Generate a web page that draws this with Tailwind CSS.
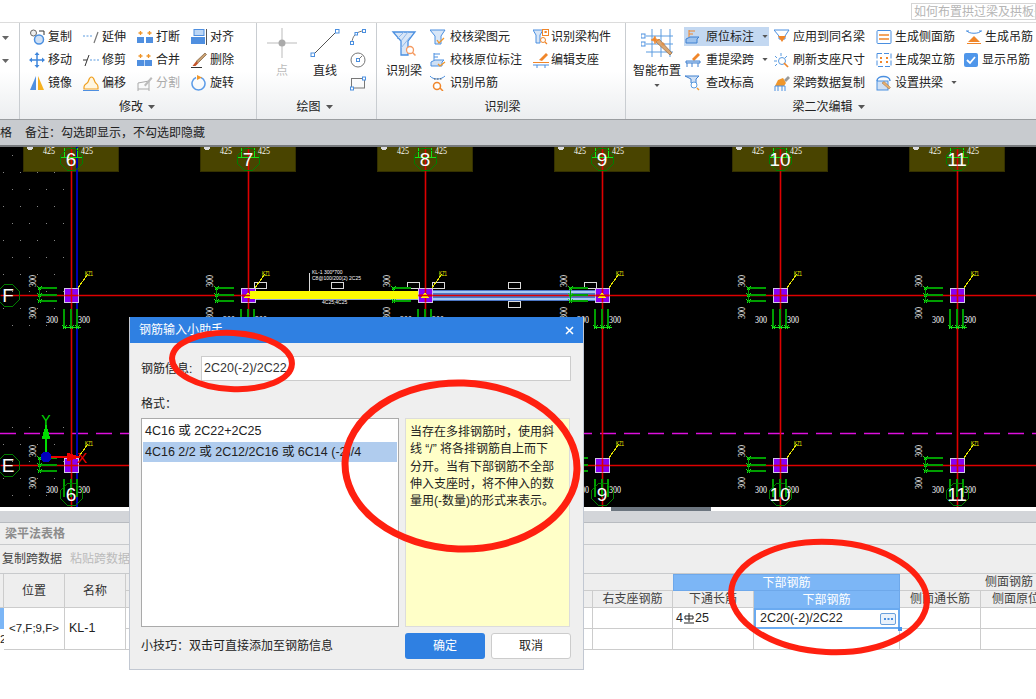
<!DOCTYPE html>
<html lang="zh">
<head>
  <meta charset="UTF-8" />
  <title>梁二次编辑</title>
  <script src="https://cdn.jsdelivr.net/npm/@tailwindcss/browser@4"></script>
</head>
<body class="relative w-[1036px] h-[699px] overflow-hidden bg-white text-[12px] leading-none text-[#222] [font-family:'Liberation_Sans','Noto_Sans_CJK_SC',sans-serif]">

  <!-- title bar -->
  <div class="h-[22px] flex justify-end items-start pt-[3px] overflow-hidden">
    <div class="w-[125px] h-[17px] border border-[#d5d5d5] pl-[2px] text-[#b5b5b5] overflow-hidden whitespace-nowrap leading-[16px]">如何布置拱过梁及拱板处</div>
  </div>

  <!-- ribbon -->
  <div class="h-[97px] flex border-t border-[#dcdcdc] bg-linear-to-b from-white via-white via-50% to-[#eceef0]">
    <div class="w-[20px] border-r border-[#c9cdd1] pl-[2px] pt-[13px] flex flex-col gap-[19px]">
      <svg class="w-[7px] h-[4px]" viewBox="0 0 7 4"><path d="M0 0h7L3.500 4z" fill="#666"/></svg>
      <svg class="w-[7px] h-[4px]" viewBox="0 0 7 4"><path d="M0 0h7L3.500 4z" fill="#666"/></svg>
    </div>

    <!-- 修改 -->
    <div class="w-[237px] border-r border-[#c9cdd1] flex flex-col">
      <div class="h-[72px] pt-[2px] pl-[9px] grid grid-cols-[54px_54px_54px_54px] auto-rows-[23px] items-center">
        <div class="flex items-center gap-[3px]"><svg class="w-4 h-4" viewBox="0 0 16 16"><circle cx="4.500" cy="4" r="3" fill="#eee" stroke="#666"/><circle cx="10" cy="10.500" r="4.500" fill="#cfe0f5" stroke="#4a8fe0" stroke-width="1.500"/><path d="M10 2h5v4" fill="none" stroke="#333"/></svg><span>复制</span></div>
        <div class="flex items-center gap-[3px]"><svg class="w-4 h-4" viewBox="0 0 16 16"><path d="M0 7h10" stroke="#5a9be0" stroke-dasharray="2 1.500"/><path d="M11 14L15 3" stroke="#777" stroke-width="1.200"/></svg><span>延伸</span></div>
        <div class="flex items-center gap-[3px]"><svg class="w-4 h-4" viewBox="0 0 16 16"><rect x="0" y="8" width="7" height="6" fill="#4f8fe0"/><rect x="9" y="8" width="7" height="6" fill="#4f8fe0"/><path d="M3.500 2v4M1.500 4h4M12.500 2v4M10.500 4h4" stroke="#f0962a" stroke-width="1.300"/></svg><span>打断</span></div>
        <div class="flex items-center gap-[3px]"><svg class="w-4 h-4" viewBox="0 0 16 16"><rect x="3" y="0.500" width="10" height="6" fill="#bcd6f5" stroke="#4f8fe0"/><rect x="0" y="8" width="14" height="7" fill="#4f8fe0"/><path d="M15.500 0v16" stroke="#555"/></svg><span>对齐</span></div>

        <div class="flex items-center gap-[3px]"><svg class="w-4 h-4" viewBox="0 0 16 16"><path d="M8 0l2.500 3h-5zM8 16l2.500-3h-5zM0 8l3-2.500v5zM16 8l-3-2.500v5z" fill="#3f86dc"/><path d="M8 3v10M3 8h10" stroke="#3f86dc" stroke-width="1.500"/></svg><span>移动</span></div>
        <div class="flex items-center gap-[3px]"><svg class="w-4 h-4" viewBox="0 0 16 16"><path d="M0 8h4" stroke="#333"/><path d="M7 8h9" stroke="#5a9be0" stroke-dasharray="2 1.500"/><path d="M2 14L6 3" stroke="#333"/></svg><span>修剪</span></div>
        <div class="flex items-center gap-[3px]"><svg class="w-4 h-4" viewBox="0 0 16 16"><rect x="0" y="8" width="15" height="6" fill="#4f8fe0"/><path d="M7.500 8v6" stroke="#bcd6f5"/><path d="M3.500 2v4M1.500 4h4M11.500 2v4M9.500 4h4" stroke="#f0962a" stroke-width="1.300"/></svg><span>合并</span></div>
        <div class="flex items-center gap-[3px]"><svg class="w-4 h-4" viewBox="0 0 16 16"><path d="M14 1l1.500 1.500-8 8-2.500-1z" fill="#c9a070" stroke="#6b4a2a" stroke-width=".6"/><path d="M5 9.500l2.500 1.500-3 3-3 0z" fill="#c4542a"/><path d="M0 15.500h11" stroke="#333"/></svg><span>删除</span></div>

        <div class="flex items-center gap-[3px]"><svg class="w-4 h-4" viewBox="0 0 16 16"><path d="M7 1v14H1z" fill="#4f8fe0"/><path d="M9 1v14h6z" fill="#f5b01e"/></svg><span>镜像</span></div>
        <div class="flex items-center gap-[3px]"><svg class="w-4 h-4" viewBox="0 0 16 16"><path d="M1 12c0-3 3-3 4-5s1-5 3.500-5S11 5 12 7s3 2 3 5v2H1z" fill="#fff6e0" stroke="#f0a020" stroke-width="1.200"/><path d="M0 15.500h16" stroke="#4f8fe0"/></svg><span>偏移</span></div>
        <div class="flex items-center gap-[3px] text-[#aaa]"><svg class="w-4 h-4" viewBox="0 0 16 16"><path d="M1 8l11-2v8H1zM1 14v2M12 14v2" fill="none" stroke="#aaa"/><path d="M7 10l7-8 1.500 1.500-7 8z" fill="#bbb"/></svg><span>分割</span></div>
        <div class="flex items-center gap-[3px]"><svg class="w-4 h-4" viewBox="0 0 16 16"><path d="M5 2.500a6.500 6.500 0 1 0 5 0" fill="none" stroke="#5b9be8" stroke-width="1.500"/><path d="M6 0l5 2.500L6 5z" fill="#f0962a"/></svg><span>旋转</span></div>
      </div>
      <div class="h-[24px] flex items-center justify-center gap-[5px] pr-[2px]"><span>修改</span><svg class="w-[7px] h-[4px]" viewBox="0 0 7 4"><path d="M0 0h7L3.500 4z" fill="#555"/></svg></div>
    </div>

    <!-- 绘图 -->
    <div class="w-[120px] border-r border-[#c9cdd1] flex flex-col">
      <div class="h-[72px] pt-[2px] pl-[7px] flex">
        <div class="w-[36px] flex flex-col items-center text-[#bbb]">
          <svg class="w-[30px] h-[30px] mt-[3px]" viewBox="0 0 30 30"><path d="M15 0v30M0 15h30" stroke="#bbb"/><circle cx="15" cy="15" r="3.500" fill="#aaa"/></svg>
          <span class="mt-[4px] leading-[18px]">点</span>
        </div>
        <div class="w-[50px] flex flex-col items-center">
          <svg class="w-[30px] h-[30px] mt-[3px]" viewBox="0 0 30 30"><path d="M3 27L27 3" stroke="#555"/><rect x="1" y="25" width="3.500" height="3.500" fill="#fff" stroke="#4a8fe0"/><rect x="25.500" y="1.500" width="3.500" height="3.500" fill="#fff" stroke="#4a8fe0"/></svg>
          <span class="mt-[4px] leading-[18px]">直线</span>
        </div>
        <div class="flex flex-col">
          <div class="h-[23px] flex items-center"><svg class="w-4 h-4" viewBox="0 0 16 16"><path d="M2 14C2 7 7 2 14 2" fill="none" stroke="#777"/><rect x="0.500" y="12.500" width="3" height="3" fill="#fff" stroke="#4a8fe0"/><rect x="12.500" y="0.500" width="3" height="3" fill="#fff" stroke="#4a8fe0"/><rect x="5" y="3.500" width="2.500" height="2.500" fill="#fff" stroke="#4a8fe0"/></svg></div>
          <div class="h-[23px] flex items-center"><svg class="w-4 h-4" viewBox="0 0 16 16"><circle cx="8" cy="8" r="7" fill="none" stroke="#777"/><rect x="6.500" y="6.500" width="3" height="3" fill="#fff" stroke="#4a8fe0"/><path d="M9 7l3-3" stroke="#777"/></svg></div>
          <div class="h-[23px] flex items-center"><svg class="w-4 h-4" viewBox="0 0 16 16"><rect x="1.500" y="3.500" width="13" height="9.500" fill="none" stroke="#777"/><rect x="0.500" y="12" width="3" height="3" fill="#fff" stroke="#4a8fe0"/><rect x="12.500" y="2" width="3" height="3" fill="#fff" stroke="#4a8fe0"/></svg></div>
        </div>
      </div>
      <div class="h-[24px] flex items-center justify-center gap-[5px] pr-[4px]"><span>绘图</span><svg class="w-[7px] h-[4px]" viewBox="0 0 7 4"><path d="M0 0h7L3.500 4z" fill="#555"/></svg></div>
    </div>

    <!-- 识别梁 -->
    <div class="w-[249px] border-r border-[#c9cdd1] flex flex-col">
      <div class="h-[72px] pt-[2px] pl-[7px] flex">
        <div class="w-[40px] flex flex-col items-center">
          <svg class="w-[30px] h-[30px] mt-[3px]" viewBox="0 0 30 30"><path d="M4 4h22l-7 9v14h-7V13z" fill="#d8e6f7" stroke="#4a8fe0" stroke-width="1.300"/><path d="M8 11l7-7M12 13l7-9M12 20l9-11" stroke="#8fb8ea"/><circle cx="21" cy="22" r="3.500" fill="#fff" stroke="#f59a60" stroke-width="1.300"/><path d="M23.500 24.500l3 3" stroke="#f59a60" stroke-width="1.500"/></svg>
          <span class="mt-[4px] leading-[18px]">识别梁</span>
        </div>
        <div class="ml-[6px] w-[103px] flex flex-col">
          <div class="h-[23px] flex items-center gap-[4px]"><svg class="w-4 h-4" viewBox="0 0 16 16"><path d="M0 1h15l-4 6v8H5V7z" fill="#d8e6f7" stroke="#4a8fe0"/><path d="M7 11l2 3 5-5" fill="none" stroke="#f0962a" stroke-width="1.300"/></svg><span>校核梁图元</span></div>
          <div class="h-[23px] flex items-center gap-[4px]"><svg class="w-4 h-4" viewBox="0 0 16 16"><path d="M4 8V1M4 2h6M4 5h4" stroke="#4a8fe0" fill="none"/><path d="M1 10l4-2h9l-2 2v4H1z" fill="#cfe0f5" stroke="#4a8fe0"/><path d="M8 12l2 2 5-4" fill="none" stroke="#f0962a" stroke-width="1.300"/></svg><span>校核原位标注</span></div>
          <div class="h-[23px] flex items-center gap-[4px]"><svg class="w-4 h-4" viewBox="0 0 16 16"><path d="M0 1c3 4 11 4 15 0" fill="none" stroke="#4a8fe0"/><path d="M4 4h8" stroke="#555" stroke-dasharray="1.500 1.500"/><circle cx="7" cy="11" r="3.500" fill="#fff" stroke="#f0862a" stroke-width="1.500"/><path d="M10 13l3 3" stroke="#f0862a" stroke-width="1.500"/></svg><span>识别吊筋</span></div>
        </div>
        <div class="flex flex-col">
          <div class="h-[23px] flex items-center gap-[2px]"><svg class="w-4 h-4" viewBox="0 0 16 16"><path d="M0 1h10l-3 5v8H3V6z" fill="#d8e6f7" stroke="#4a8fe0"/><rect x="9.500" y="0.500" width="6" height="6" fill="#fff" stroke="#f0862a"/><path d="M11.500 3.500h2v-1h-2" fill="none" stroke="#f0862a"/><circle cx="10" cy="11" r="2.500" fill="#fff" stroke="#f0862a"/><path d="M12 13l2 2" stroke="#f0862a" stroke-width="1.300"/></svg><span>识别梁构件</span></div>
          <div class="h-[23px] flex items-center gap-[2px]"><svg class="w-4 h-4" viewBox="0 0 16 16"><path d="M6 8l7-7 2 2-6 6z" fill="#f0862a"/><path d="M0 10.500h16" stroke="#f0862a"/><path d="M0 13h16M4 13v3M12 13v3" stroke="#4a8fe0"/></svg><span>编辑支座</span></div>
        </div>
      </div>
      <div class="h-[24px] flex items-center justify-center pl-[3px]"><span>识别梁</span></div>
    </div>

    <!-- 梁二次编辑 -->
    <div class="w-[409px] flex flex-col">
      <div class="h-[72px] pt-[2px] pl-[6px] flex">
        <div class="w-[50px] flex flex-col items-center">
          <svg class="w-[32px] h-[30px] mt-[3px]" viewBox="0 0 32 30"><path d="M5 8h27M5 16h27M5 24h27M11 1v28M20 1v28M29 1v28" stroke="#5a9be0" fill="none"/><rect x="0" y="6" width="4" height="4" fill="#fff" stroke="#4a8fe0"/><rect x="0" y="14" width="4" height="4" fill="#fff" stroke="#4a8fe0"/><path d="M15 14l14 13 2-2-13-14z" fill="#d9a672" stroke="#8b5a2a" stroke-width=".6"/><path d="M12 11l2-3 1 3 3 1-3 1-1 3-1-3-3-1zM22 14v4M20 16h4" fill="#f0862a" stroke="#f0862a" stroke-width=".6"/></svg>
          <span class="mt-[4px] leading-[18px] whitespace-nowrap">智能布置</span>
          <svg class="w-[6px] h-[3px] mt-[4px]" viewBox="0 0 7 4"><path d="M0 0h7L3.500 4z" fill="#555"/></svg>
        </div>
        <div class="ml-[2px] w-[90px] flex flex-col">
          <div class="h-[23px] flex items-center"><div class="w-[85px] h-[19px] bg-[#c3d8f1] flex items-center pl-px"><svg class="w-4 h-4 mr-[5px]" viewBox="0 0 16 16"><path d="M4 8V1M4 2h6M4 5h4" stroke="#f0862a" fill="none"/><path d="M1 10l4-2h9l-2 2v4H1z" fill="#9cc2ee" stroke="#3f80d0"/></svg><span>原位标注</span><svg class="w-[6px] h-[3px] ml-[8px]" viewBox="0 0 7 4"><path d="M0 0h7L3.500 4z" fill="#555"/></svg></div></div>
          <div class="h-[23px] flex items-center pl-px"><svg class="w-4 h-4 mr-[5px]" viewBox="0 0 16 16"><path d="M7 7l6-6 2 2-6 6z" fill="#f0862a"/><path d="M1 9h14v2H1zM2 11v4M7 11v4M13 11v4" fill="#cfe0f5" stroke="#3f80d0"/></svg><span>重提梁跨</span><svg class="w-[6px] h-[3px] ml-[8px]" viewBox="0 0 7 4"><path d="M0 0h7L3.500 4z" fill="#555"/></svg></div>
          <div class="h-[23px] flex items-center pl-px"><svg class="w-4 h-4 mr-[5px]" viewBox="0 0 16 16"><path d="M0 1h14l-3 3v4H6V4z" fill="#cfe0f5" stroke="#3f80d0"/><circle cx="9" cy="10" r="3" fill="#fff" stroke="#5a9be0"/><path d="M12 13l2 2" stroke="#f0962a" stroke-width="1.500"/></svg><span>查改标高</span></div>
        </div>
        <div class="w-[102px] flex flex-col">
          <div class="h-[23px] flex items-center gap-[3px]"><svg class="w-4 h-4" viewBox="0 0 16 16"><path d="M0 1h15l-4 6v3H5V7z" fill="none" stroke="#4a8fe0"/><path d="M4 7h8L8 13z" fill="#f0862a"/></svg><span>应用到同名梁</span></div>
          <div class="h-[23px] flex items-center gap-[3px]"><svg class="w-4 h-4" viewBox="0 0 16 16"><path d="M7 1v3M1 4l2 2M13 4l-2 2M0 9h3M1 14l2-2" stroke="#5a9be0"/><circle cx="8" cy="9" r="3.500" fill="#fff" stroke="#5a9be0"/><path d="M10 11l4 4" stroke="#f0862a" stroke-width="1.700"/></svg><span>刷新支座尺寸</span></div>
          <div class="h-[23px] flex items-center gap-[3px]"><svg class="w-4 h-4" viewBox="0 0 16 16"><path d="M10 5l4-4 2 2-4 4z" fill="#999"/><path d="M4 5l5-2 3 5-2 3H1z" fill="#f0962a"/><path d="M1 16v-5h10v5M4 11v5M8 11v5" fill="none" stroke="#4a8fe0"/></svg><span>梁跨数据复制</span></div>
        </div>
        <div class="w-[90px] flex flex-col">
          <div class="h-[23px] flex items-center gap-[3px]"><svg class="w-4 h-4" viewBox="0 0 16 16"><rect x="1" y="1.500" width="14" height="13" rx="1" fill="#fff" stroke="#4a8fe0"/><path d="M3 6h10M3 10h10" stroke="#f0862a" stroke-width="1.300"/></svg><span>生成侧面筋</span></div>
          <div class="h-[23px] flex items-center gap-[3px]"><svg class="w-4 h-4" viewBox="0 0 16 16"><rect x="1" y="1.500" width="14" height="13" fill="#fff" stroke="#4a8fe0" stroke-dasharray="5 2"/><path d="M4 5h2v2H4zM10 5h2v2h-2zM4 9h2v2H4zM10 9h2v2h-2z" fill="#f0862a"/></svg><span>生成架立筋</span></div>
          <div class="h-[23px] flex items-center gap-[3px]"><svg class="w-4 h-4" viewBox="0 0 16 16"><path d="M1 6c0-6 13-6 13 0" fill="none" stroke="#4a8fe0" stroke-width="1.500"/><rect x="1" y="6" width="11" height="9" fill="#cfe0f5" stroke="#4a8fe0"/><path d="M6 8l7 6 1.500-1.500-6.500-6z" fill="#e8b070" stroke="#9a6a3a" stroke-width=".5"/></svg><span>设置拱梁</span><svg class="w-[6px] h-[3px] ml-[5px]" viewBox="0 0 7 4"><path d="M0 0h7L3.500 4z" fill="#555"/></svg></div>
        </div>
        <div class="flex flex-col">
          <div class="h-[23px] flex items-center gap-[3px]"><svg class="w-4 h-4" viewBox="0 0 16 16"><path d="M1 2c2 3 12 3 14 0M0 2h3M13 2h3" fill="none" stroke="#4a8fe0"/><path d="M8 7l6 6H2z" fill="#f0862a"/><path d="M1 14.500h14" stroke="#f0862a"/></svg><span>生成吊筋</span></div>
          <div class="h-[23px] flex items-center gap-[4px] ml-[-2px]"><svg class="w-[14px] h-[14px]" viewBox="0 0 14 14"><rect width="14" height="14" rx="2" fill="#4f96ea"/><path d="M3 7l3 3 5-6" fill="none" stroke="#fff" stroke-width="1.800"/></svg><span>显示吊筋</span></div>
        </div>
      </div>
      <div class="h-[24px] flex items-center justify-center gap-[5px] pr-[4px]"><span>梁二次编辑</span><svg class="w-[7px] h-[4px]" viewBox="0 0 7 4"><path d="M0 0h7L3.500 4z" fill="#555"/></svg></div>
    </div>
  </div>

  <!-- note bar -->
  <div class="h-[28px] bg-[#c8cbcf] border-t border-[#9a9da0] border-b-2 border-b-[#777a7d] flex items-center whitespace-nowrap">
    <span class="w-[25px] overflow-hidden">格</span><span>备注：勾选即显示，不勾选即隐藏</span>
  </div>

  <!-- drawing canvas -->
  <div class="h-[360px] bg-black">
    <svg id="cad" class="block w-[1036px] h-[360px] opacity-[.99]" viewBox="0 147 1036 360" shape-rendering="crispEdges"></svg>
  </div>

  <!-- scroll strip -->
  <div class="h-[4px] bg-white pl-[611px]"><div class="w-[100px] h-[4px] bg-[#6d7680]"></div></div>
  <div class="h-[12px] bg-[#d3d5d9] border-b border-[#b8bbc0]"></div>

  <!-- table panel -->
  <div class="h-[22px] bg-[#eeeeee] border-b border-[#c8cacc] flex items-center pl-[5px] font-bold text-[#8c8c8c]">梁平法表格</div>
  <div class="h-[29px] bg-[#eeeeee] border-b border-[#c8cacc] flex items-center pl-[2px] gap-[8px]">
    <span class="text-[#444]">复制跨数据</span><span class="text-[#bbb]">粘贴跨数据</span>
  </div>

  <div class="grid grid-cols-[4px_61px_61px_467px_80px_81px_146px_81px_94px_45px] grid-rows-[17px_17px_21px_21px] w-[1126px] text-center">
    <div class="row-span-2 bg-[#eeeeee] border-b border-r border-[#ccc]"></div>
    <div class="row-span-2 bg-[#eeeeee] border-b border-r border-[#ccc] flex items-center justify-center text-[#333]">位置</div>
    <div class="row-span-2 bg-[#eeeeee] border-b border-r border-[#ccc] flex items-center justify-center text-[#333]">名称</div>
    <div class="col-span-2 bg-[#eeeeee] border-b border-[#ccc]"></div>
    <div class="col-span-2 bg-[#7cb6f6] border border-[#6ea8ea] text-white flex items-center justify-center">下部钢筋</div>
    <div class="col-span-3 bg-[#eeeeee] border-b border-[#ccc] flex items-center justify-start pl-[85px] text-[#444]">侧面钢筋</div>

    <div class="bg-[#eeeeee] border-b border-r border-[#ccc]"></div>
    <div class="bg-[#eeeeee] border-b border-r border-[#ccc] flex items-center justify-center text-[#444]">右支座钢筋</div>
    <div class="bg-[#eeeeee] border-b border-r border-[#ccc] flex items-center justify-center text-[#444]">下通长筋</div>
    <div class="bg-[#7cb6f6] border-r border-[#6ea8ea] text-white flex items-center justify-center">下部钢筋</div>
    <div class="bg-[#eeeeee] border-b border-r border-[#ccc] flex items-center justify-center text-[#444]">侧面通长筋</div>
    <div class="bg-[#eeeeee] border-b border-r border-[#ccc] flex items-center justify-start pl-[11px] whitespace-nowrap overflow-hidden text-[#444]">侧面原位标注</div>
    <div class="bg-[#eeeeee] border-b border-[#ccc]"></div>

    <div class="bg-[#7cb6f6]"></div>
    <div class="row-span-2 border-b border-r border-[#ccc] flex items-center justify-center text-[11.500px]">&lt;7,F;9,F&gt;</div>
    <div class="row-span-2 border-b border-r border-[#ccc] flex items-center pl-[4px] text-[12.500px]">KL-1</div>
    <div class="border-b border-r border-[#ccc]"></div>
    <div class="border-b border-r border-[#ccc]"></div>
    <div class="border-b border-r border-[#ccc] flex items-center pl-[3px] text-[12.500px]">4<svg class="w-[10px] h-[11px] mx-px" viewBox="0 0 10 11"><path d="M5 0v9M1 3h8v3H1zM0 10h10" fill="none" stroke="#222"/></svg>25</div>
    <div class="relative border-2 border-[#6aaaf0] flex items-center justify-between pl-[4px] pr-[2px] text-[12.500px]">
      <span>2C20(-2)/2C22</span>
      <span class="w-[16px] h-[12px] rounded-[2px] border border-[#6aa0dc] bg-[#eaf2fb] flex items-center justify-center"><svg class="w-[9px] h-[2px]" viewBox="0 0 9 2"><path d="M0 0h2v2H0zM3.500 0h2v2h-2zM7 0h2v2H7z" fill="#4a8fe0"/></svg></span>
      <span class="absolute right-[-4px] bottom-[-4px] w-[4px] h-[4px] bg-[#4a96ee]"></span>
    </div>
    <div class="border-b border-r border-[#ccc]"></div>
    <div class="border-b border-r border-[#ccc]"></div>
    <div class="border-b border-[#ccc]"></div>

    <div class="overflow-hidden text-[11.500px] leading-[21px] text-left whitespace-nowrap">2</div>
    <div class="border-b border-r border-[#ccc]"></div>
    <div class="border-b border-r border-[#ccc]"></div>
    <div class="border-b border-r border-[#ccc]"></div>
    <div class="border-b border-r border-[#ccc]"></div>
    <div class="border-b border-r border-[#ccc]"></div>
    <div class="border-b border-r border-[#ccc]"></div>
    <div class="border-b border-[#ccc]"></div>
  </div>

  <!-- dialog -->
  <div class="absolute left-[129px] top-[317px] w-[455px] h-[353px] bg-[#efefef] border border-[#c2c8d2] border-t-0 flex flex-col">
    <div class="h-[26px] bg-[#2f80e2] text-white flex items-center justify-between pl-[9px] pr-[9px]">
      <span>钢筋输入小助手</span>
      <svg class="w-[9px] h-[9px]" viewBox="0 0 9 9"><path d="M1 1l7 7M8 1L1 8" stroke="#fff" stroke-width="1.500"/></svg>
    </div>
    <div class="flex items-center h-[25px] mt-[13px] pl-[11px]">
      <span class="w-[60px]">钢筋信息:</span>
      <div class="w-[370px] h-[25px] bg-white border border-[#ccc] flex items-center pl-[2px] text-[12.500px] text-[#333]">2C20(-2)/2C22</div>
    </div>
    <div class="mt-[16px] pl-[11px] h-[14px] leading-[14px]">格式：</div>
    <div class="flex mt-[7px] pl-[11px] gap-[6px]">
      <div class="w-[258px] h-[209px] bg-white border border-[#aaa] p-px text-[12.500px]">
        <div class="h-[22px] flex items-center pl-[2px]">4C16 或 2C22+2C25</div>
        <div class="h-[20px] bg-[#b0ccee] flex items-center pl-[2px]">4C16 2/2 或 2C12/2C16 或 6C14 (-2)/4</div>
      </div>
      <div class="w-[165px] h-[209px] bg-[#ffffc8] border border-[#dcdcdc] pt-[5px] pl-[4px] pr-0 leading-[17.300px] whitespace-nowrap">当存在多排钢筋时，使用斜<br>线 “/” 将各排钢筋自上而下<br>分开。当有下部钢筋不全部<br>伸入支座时，将不伸入的数<br>量用(-数量)的形式来表示。</div>
    </div>
    <div class="flex items-center mt-[6px] pl-[11px] h-[26px]">
      <span class="w-[264px]">小技巧：双击可直接添加至钢筋信息</span>
      <button class="w-[80px] h-[26px] rounded-[3px] bg-[#2f80e2] text-white">确定</button>
      <button class="w-[80px] h-[26px] ml-[6px] rounded-[3px] bg-white border border-[#ccc]">取消</button>
    </div>
  </div>

  <!-- hand-drawn red marks on top of the screenshot -->
  <svg class="absolute left-0 top-0 w-[1036px] h-[699px] pointer-events-none" viewBox="0 0 1036 699">
    <g fill="none" stroke="#ff2010">
      <ellipse cx="232" cy="361" rx="60" ry="28" stroke-width="6" transform="rotate(3 232 361)"/>
      <ellipse cx="461" cy="466" rx="116" ry="83" stroke-width="7" transform="rotate(2 461 466)"/>
      <ellipse cx="829" cy="597" rx="98" ry="55" stroke-width="6" transform="rotate(3 829 597)"/>
    </g>
  </svg>

  <script>
    const cols = [[71, '6'], [248, '7'], [425, '8'], [602, '9'], [780, '10'], [957, '11']];
    const GREEN = '#00a000', BRIGHT = '#19e619', RED = '#e00000';
    let s = '';

    // shift by half a pixel so a 1px stroke lands on one whole pixel
    function line(x1, y1, x2, y2, c, w) {
      const o = (w || 1) === 2 ? 0 : .5;
      return `<line x1="${x1 + o}" y1="${y1 + o}" x2="${x2 + o}" y2="${y2 + o}" stroke="${c}" stroke-width="${w || 1}"/>`;
    }
    // grid axes stay antialiased: the soft edge keeps them red at 1px
    function axis(x1, y1, x2, y2, c) {
      return `<line x1="${x1 + .5}" y1="${y1 + .5}" x2="${x2 + .5}" y2="${y2 + .5}" stroke="${c}" stroke-width="1.600" shape-rendering="auto"/>`;
    }
    function box(x, y, w, h, fill, stroke, extra) {
      return `<rect x="${x + .5}" y="${y + .5}" width="${w}" height="${h}" fill="${fill}" stroke="${stroke}" ${extra || ''}/>`;
    }
    function dim(x, y, t, rot) {
      const tr = rot ? ` transform="rotate(-90 ${x} ${y})"` : '';
      return `<text x="${x}" y="${y + 3}" fill="#fff" font-family="Liberation Serif" font-size="10" text-anchor="middle" textLength="12" lengthAdjust="spacingAndGlyphs"${tr}>${t}</text>`;
    }
    function bubble(x, y, t) {
      let pts = [];
      for (let i = 0; i < 8; i++) {
        const a = i * Math.PI / 4 + Math.PI / 8;
        pts.push((x + .5 + 11.500 * Math.cos(a)).toFixed(1) + ',' + (y + .5 + 11.500 * Math.sin(a)).toFixed(1));
      }
      return `<polygon points="${pts.join(' ')}" fill="none" stroke="#008000"/>`
        + `<text x="${x}" y="${y + 7}" fill="#fff" font-family="Liberation Sans" font-size="19" text-anchor="middle">${t}</text>`;
    }
    function cross(x, y) {
      return line(x - 2, y - 2, x + 2, y + 2, BRIGHT) + line(x - 2, y + 2, x + 2, y - 2, BRIGHT);
    }

    // background dot grid, left of axis 6
    for (let y = 155, row = 0; y < 510; y += 17, row++) {
      if (y > 330 && y < 420) continue;
      for (let i = 0; i < 4; i++) {
        const x = (row % 2 ? 3 : 12) + i * 17;
        s += `<rect x="${x}" y="${y}" width="1" height="1" fill="#888"/>`;
      }
    }

    // magenta dashed axis
    s += `<line x1="0" y1="433.500" x2="1036" y2="433.500" stroke="#e010e0" stroke-width="1.600" stroke-dasharray="16 8" shape-rendering="auto"/>`;

    // olive slabs on top row
    cols.forEach(([x]) => {
      s += box(x - 48, 140, 95, 31, '#4a4500', '#363200');
    });

    // axes
    cols.forEach(([x]) => { s += axis(x, 147, x, 507, RED); });
    s += line(77, 147, 77, 507, '#0000b4', 2);
    s += axis(0, 295, 1036, 295, RED) + axis(0, 465, 1036, 465, RED);

    // beams
    s += box(248, 291, 177, 8, '#ffff00', '#8fa9d8');
    s += `<rect x="425" y="290" width="177" height="11" fill="#4d78c8"/>`;
    s += line(425, 292, 602, 292, '#a8ccf5', 2) + line(425, 299, 602, 299, '#a8ccf5', 2) + axis(425, 295, 602, 295, RED);

    // beam marks
    [[254, 282], [331, 282], [407, 282], [432, 282], [508, 282], [584, 282], [508, 301]].forEach(([x, y]) => {
      s += box(x, y, 12, 6, 'none', '#ddd', 'rx="1"');
    });
    s += line(309, 272, 309, 291, '#ddd');
    s += `<text x="312" y="274" fill="#fff" font-family="Liberation Sans" font-size="5">KL-1 300*700</text>`;
    s += `<text x="312" y="280" fill="#fff" font-family="Liberation Sans" font-size="5">C8@100/200(2) 2C25</text>`;
    s += `<text x="322" y="304" fill="#fff" font-family="Liberation Sans" font-size="5">4C25;4C25</text>`;

    cols.forEach(([x, label]) => {
      // top ticks
      s += line(x - 7, 147, x - 7, 157, BRIGHT) + line(x + 6, 147, x + 6, 157, BRIGHT) + line(x - 11, 157, x + 11, 157, BRIGHT);
      s += dim(x - 22, 151, '425') + dim(x + 16, 151, '425');
      s += `<ellipse cx="${x - 41}" cy="147" rx="3" ry="3" fill="#ddd"/>`;
      s += bubble(x, 159, label);

      [295, 465].forEach(y => {
        // rebar ticks left of the column
        [-7, 0, 6].forEach(d => { s += line(x - 33, y + d, x - 14, y + d, GREEN, 2) + cross(x - 32, y + d); });
        s += line(x - 32, y - 7, x - 32, y + 6, GREEN);
        s += dim(x - 38, y - 14, '300', true) + dim(x - 38, y + 18, '300', true);
        // ticks under the column
        [-7, 0, 6].forEach(d => { s += line(x + d, y + 14, x + d, y + 32, GREEN, 2); });
        if (y === 295) {
          s += line(x - 9, y + 32, x + 9, y + 32, BRIGHT);
          [-7, 0, 6].forEach(d => { s += cross(x + d, y + 32); });
        }
        s += dim(x - 19, y + 25, '300') + dim(x + 13, y + 25, '300');
        // column
        s += box(x - 7, y - 7, 14, 14, '#8a00f8', '#d8c8e8');
        s += axis(x - 7, y, x + 7, y, RED) + axis(x, y - 7, x, y + 7, RED);
        s += line(x + 6, y - 7, x + 16, y - 21, '#e8e800');
        s += `<text x="${x + 14}" y="${y - 19}" fill="#ffff00" font-family="Liberation Sans" font-size="7" textLength="8" lengthAdjust="spacingAndGlyphs">KZ1</text>`;
      });
      s += bubble(x, 494, label);
    });

    // yellow tips where the beams meet columns
    [248, 425, 602].forEach(x => {
      s += `<path d="M${x - 4} 298l4-6 4 6z" fill="#ffff00"/>`;
      s += axis(x - 7, 295, x + 7, 295, RED);
    });
    s += `<rect x="250" y="291" width="168" height="8" fill="#ffff00"/>`;

    s += bubble(8, 295, 'F') + bubble(8, 465, 'E');

    // UCS marker
    s += `<path d="M46 457V438h-3l3-11 3 11h-3" fill="#00e000" stroke="#00e000" stroke-width="2"/>`;
    s += `<path d="M46 457H68v-3l10 3-10 3v-3" fill="#f00000" stroke="#f00000" stroke-width="2"/>`;
    s += `<circle cx="46" cy="457" r="5.500" fill="#0000c0"/>`;
    s += `<text x="46" y="425" fill="#00e000" font-family="Liberation Sans" font-size="14" text-anchor="middle">Y</text>`;
    s += `<text x="82" y="463" fill="#f00000" font-family="Liberation Sans" font-size="15" text-anchor="middle">X</text>`;

    document.getElementById('cad').innerHTML = s;
  </script>
</body>
</html>
